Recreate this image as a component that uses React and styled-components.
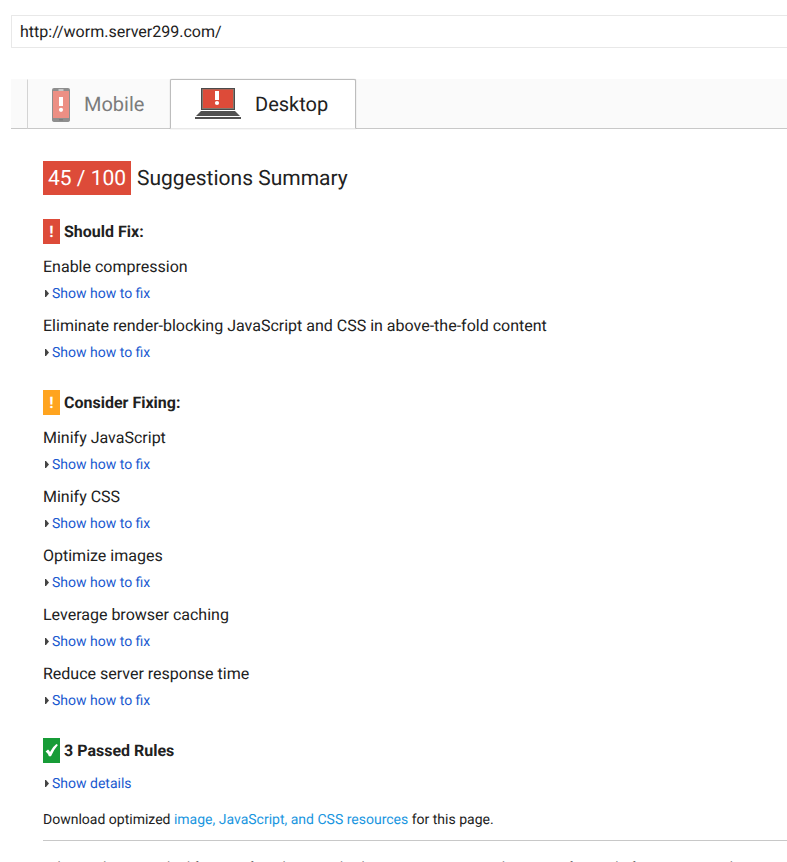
import React from "react";
import styled, { createGlobalStyle } from "styled-components";

const Global = createGlobalStyle`
  * { box-sizing: border-box; }
  body { margin: 0; background: #fff; overflow: hidden; }
`;

const Page = styled.div`
  height: 862px;
  overflow: hidden;
  padding: 15px 0 0 11px;
  background: #fff;
  color: #212121;
  font-family: Roboto, sans-serif;
  font-size: 16px;
  text-rendering: geometricPrecision;
`;

const UrlBox = styled.div`
  height: 33px;
  border: 1px solid #e8e8e8;
  border-right: 0;
  border-radius: 1px 0 0 1px;
  padding-left: 8px;
  line-height: 32px;
`;

const TabBar = styled.div`
  display: flex;
  height: 50px;
  margin-top: 31px;
  padding-left: 16px;
  background: #fafafa;
  border-bottom: 1px solid #c8c8c8;
`;

const Tab = styled.div`
  display: flex;
  align-items: center;
  width: ${(p) => p.$width}px;
  height: 50px;
  font-size: 20px;
  border: 1px solid ${(p) => (p.$active ? "#bdbdbd" : "transparent")};
  border-left-color: ${(p) => (p.$active ? "#bdbdbd" : "#d4d4d4")};
  border-bottom-color: ${(p) => (p.$active ? "#e8e8e8" : "transparent")};
  border-radius: ${(p) => (p.$active ? "2px 2px 0 0" : "0")};
  background: ${(p) => (p.$active ? "#fff" : "transparent")};
  box-shadow: ${(p) => (p.$active ? "0 0 1px rgba(0,0,0,.35)" : "none")};
  color: ${(p) => (p.$active ? "#212121" : "#7c7c7c")};
  padding-left: 24px;

  svg { flex: none; margin-right: 14px; }
`;

const Main = styled.main`
  padding: 32px 0 0 32px;
`;

const Summary = styled.h2`
  display: flex;
  height: 34px;
  margin: 0;
  font-size: 21px;
  font-weight: 400;
  line-height: 36px;
`;

const Score = styled.span`
  width: 88px;
  height: 34px;
  margin-right: 6px;
  background: #dd4b39;
  color: #fff;
  text-align: center;
`;

const Group = styled.section`
  margin-top: ${(p) => p.$top}px;
`;

const GroupTitle = styled.h3`
  display: flex;
  align-items: center;
  height: 25px;
  margin: 0 0 ${(p) => p.$gap ?? 10}px;
  font-size: 16px;
  font-weight: 700;
  line-height: 25px;
`;

const Badge = styled.span`
  display: flex;
  align-items: center;
  justify-content: center;
  width: 17px;
  height: 25px;
  margin-right: 4px;
  background: ${(p) => p.$color};
  color: #fff;
`;

const Rule = styled.div`
  height: 59px;
`;

const RuleName = styled.div`
  height: 26px;
  line-height: 26px;
`;

const Toggle = styled.a`
  display: flex;
  align-items: center;
  height: 26px;
  color: #1a59cf;
  font-size: 14px;

  svg { margin: 0 3px 0 2px; }
`;

const ToggleLabel = styled.span`
  height: 26px;
  line-height: 28px;
`;

const Download = styled.p`
  margin: 14px 0 0;
  height: 20px;
  font-size: 14px;
  line-height: 20px;

  a { color: #1a96e0; }
`;

const Note = styled.p`
  margin: 10px 0 0;
  padding-top: 17px;
  border-top: 1px solid #c8c8c8;
  font-size: 14px;
  line-height: 20px;
`;

const PhoneIcon = () => (
  <svg width="18" height="36" viewBox="0 -2 18 36">
    <path d="M2 0h14q2 0 2 2v30q0 2-3 2H3q-3 0-3-2V2q0-2 2-2z" fill="#8e8e8e" />
    <rect x="1" y="3" width="16" height="27" fill="#ec8f84" />
    <rect x="6.5" y="1.5" width="5" height="1" fill="#fff" />
    <rect x="7" y="9" width="4" height="9" fill="#fff" />
    <circle cx="9" cy="21.8" r="2.1" fill="#fff" />
    <rect x="7" y="31" width="4" height="1.5" fill="#7c7c7c" />
  </svg>
);

const LaptopIcon = () => (
  <svg width="46" height="32" viewBox="0 0 46 32">
    <rect x="6" y="0" width="34" height="22" fill="#4b4b4b" />
    <rect x="7" y="1" width="32" height="20" fill="#83786d" />
    <rect x="8" y="1.5" width="30" height="18.5" fill="#dd4b39" />
    <rect x="20" y="3" width="4" height="9" fill="#fff" />
    <circle cx="22" cy="15" r="2.1" fill="#fff" />
    <path d="M6 23h34l5 5H1z" fill="#505050" />
    <rect x="0" y="29" width="46" height="2" fill="#505050" />
  </svg>
);

const Arrow = () => (
  <svg width="4" height="8" viewBox="0 0 4 8">
    <path d="M0 1h1l3 3.5L1 8H0z" fill="#444" />
  </svg>
);

const Check = () => (
  <svg width="13" height="14" viewBox="0 0 13 14">
    <path d="M.6 7.4 3 5.4Q4.2 6.3 5 8 7.6 2.8 11.4.1l1.5.8Q8.6 5.7 6 12.3H3.9Q2.8 9 .6 7.4z" fill="#fff" />
  </svg>
);

const Expander = ({ children }) => (
  <Toggle><Arrow /><ToggleLabel>{children}</ToggleLabel></Toggle>
);

const RuleGroup = ({ title, color, rules, top }) => (
  <Group $top={top}>
    <GroupTitle><Badge $color={color}>!</Badge>{title}</GroupTitle>
    {rules.map((name) => (
      <Rule key={name}>
        <RuleName>{name}</RuleName>
        <Expander>Show how to fix</Expander>
      </Rule>
    ))}
  </Group>
);

const shouldFix = [
  "Enable compression",
  "Eliminate render-blocking JavaScript and CSS in above-the-fold content",
];
const considerFixing = [
  "Minify JavaScript",
  "Minify CSS",
  "Optimize images",
  "Leverage browser caching",
  "Reduce server response time",
];

export default function App() {
  return (
    <Page>
      <Global />
      <UrlBox>http://worm.server299.com/</UrlBox>
      <TabBar>
        <Tab $width={143}><PhoneIcon />Mobile</Tab>
        <Tab $width={186} $active><LaptopIcon />Desktop</Tab>
      </TabBar>
      <Main>
        <Summary><Score>45 / 100</Score>Suggestions Summary</Summary>
        <RuleGroup top={24} title="Should Fix:" color="#dd4b39" rules={shouldFix} />
        <RuleGroup top={18} title="Consider Fixing:" color="#ffa41f" rules={considerFixing} />
        <Group $top={18}>
          <GroupTitle $gap={7}><Badge $color="#179c37"><Check /></Badge>3 Passed Rules</GroupTitle>
          <Expander>Show details</Expander>
        </Group>
        <Download>
          Download optimized <a>image, JavaScript, and CSS resources</a> for this page.
        </Download>
        <Note>
          *The results are cached for 30s. If you have made changes to your page, please wait for 30s before re-running the test.
        </Note>
      </Main>
    </Page>
  );
}
